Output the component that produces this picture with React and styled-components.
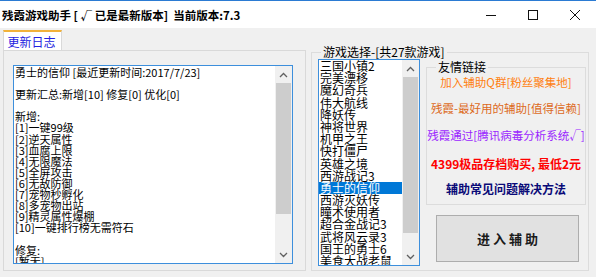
import React from 'react';
import styled, { createGlobalStyle } from 'styled-components';

const GlobalStyle = createGlobalStyle`
  html, body {
    margin: 0;
    padding: 0;
    background: #f0f0f0;
  }
  body {
    font-family: "Noto Sans CJK SC", "Noto Sans", sans-serif;
    font-size: 12px;
    color: #000;
  }
`;

const Window = styled.div`
  width: 596px;
  height: 277px;
  overflow: hidden;
  box-sizing: border-box;
  border-top: 1px solid #2b7bd3;
  background: #f0f0f0;
  display: flex;
  flex-direction: column;
`;

const TitleBar = styled.div`
  height: 27px;
  flex-shrink: 0;
  background: #fff;
  display: flex;
  align-items: center;
`;

const Title = styled.div`
  padding-left: 2px;
  font-weight: bold;
  font-size: 11.5px;
  white-space: pre;
`;

const Controls = styled.div`
  margin-left: auto;
  display: flex;
  height: 100%;
`;

const CtrlButton = styled.div`
  width: 42px;
  display: flex;
  align-items: center;
  justify-content: center;
`;

const Body = styled.div`
  display: flex;
  align-items: flex-start;
  padding: 2px 0 0 3px;
`;

const LeftCol = styled.div`
  width: 303px;
  display: flex;
  flex-direction: column;
`;

const TabStrip = styled.div`
  display: flex;
  height: 20px;
`;

const Tab = styled.div`
  width: 59px;
  height: 20px;
  box-sizing: border-box;
  border: 1px solid #d9d9d9;
  border-top: 2px solid #f2b23a;
  border-bottom: none;
  background: #fff;
  color: #2222e0;
  font-size: 12px;
  display: flex;
  align-items: center;
  justify-content: center;
  padding-right: 2px;
`;

const Panel = styled.div`
  height: 221px;
  box-sizing: border-box;
  border: 1px solid #d9d9d9;
  background: #f0f0f0;
  padding: 14px 0 0 9px;
`;

const TextBox = styled.div`
  width: 280px;
  height: 199px;
  box-sizing: border-box;
  border: 1px solid #3d8fdc;
  background: #fff;
  display: flex;
`;

const TextContent = styled.div`
  flex: 1;
  overflow: hidden;
  padding: 1px 0 0 1px;
  font-size: 11px;
  line-height: 11.1px;
  white-space: pre;
`;

const Scrollbar = styled.div`
  width: 17px;
  flex-shrink: 0;
  background: #f0f0f0;
  display: flex;
  flex-direction: column;
`;

const Arrow = styled.div`
  height: 17px;
  flex-shrink: 0;
  display: flex;
  align-items: center;
  justify-content: center;
  margin-top: ${p => (p.$bottom ? 'auto' : '0')};
`;

const Thumb = styled.div`
  height: ${p => p.$h}px;
  margin: 0 1px;
  background: #cdcdcd;
`;

const GroupBox = styled.fieldset`
  width: ${p => p.$w}px;
  box-sizing: border-box;
  margin: ${p => p.$m};
  padding: ${p => p.$p};
  border: 1px solid #dcdcdc;
  min-width: 0;
`;

const Legend = styled.legend`
  padding: 0 2px;
  margin-left: ${p => p.$ml}px;
  line-height: 14px;
  font-size: 12px;
`;

const GameRow = styled.div`
  display: flex;
  align-items: flex-start;
`;

const ListBox = styled.div`
  width: 102px;
  height: 207px;
  box-sizing: border-box;
  border: 1px solid #3d8fdc;
  background: #fff;
  display: flex;
`;

const ListItems = styled.div`
  flex: 1;
  overflow: hidden;
`;

const ListItem = styled.div`
  height: 12.2px;
  line-height: 12.2px;
  padding-left: 1px;
  font-size: 12px;
  white-space: nowrap;
  background: ${p => (p.$selected ? '#0078d7' : 'transparent')};
  color: ${p => (p.$selected ? '#fff' : '#000')};
`;

const RightCol = styled.div`
  margin: 1px 0 0 6px;
  display: flex;
  flex-direction: column;
`;

const LinkLine = styled.div`
  margin-top: ${p => p.$mt}px;
  height: 16px;
  line-height: 16px;
  text-align: center;
  white-space: nowrap;
  font-size: ${p => (p.$bold ? '12px' : '11.5px')};
  font-weight: ${p => (p.$bold ? 'bold' : 'normal')};
  color: ${p => p.$color};
`;

const EnterButton = styled.button`
  width: 143px;
  height: 47px;
  margin: 10px 0 0 10px;
  box-sizing: border-box;
  background: #e1e1e1;
  border: 1px solid #adadad;
  font-family: inherit;
  font-size: 13px;
  font-weight: bold;
  color: #1a1a1a;
  white-space: pre;
  padding: 0;
`;

const Chevron = ({ up }) => (
  <svg width="9" height="6" viewBox="0 0 9 6">
    <path
      d={up ? 'M1 5 L4.5 1.5 L8 5' : 'M1 1 L4.5 4.5 L8 1'}
      fill="none"
      stroke="#606060"
      strokeWidth="1.3"
    />
  </svg>
);

const logLines = [
  '勇士的信仰 [最近更新时间:2017/7/23]',
  '',
  '更新汇总:新增[10] 修复[0] 优化[0]',
  '',
  '新增:',
  '[1]一键99级',
  '[2]逆天属性',
  '[3]血腐上限',
  '[4]无限魔法',
  '[5]全屏攻击',
  '[6]无敌防御',
  '[7]宠物秒孵化',
  '[8]多宠物出站',
  '[9]精灵属性爆棚',
  '[10]一键排行榜无需符石',
  '',
  '修复:',
  '[暂无]',
];

const games = [
  '三国小镇2', '完美漂移', '魔幻奇兵', '伟大航线', '降妖传', '神将世界',
  '机甲之王', '快打僵尸', '英雄之境', '西游战记3', '勇士的信仰', '西游灭妖传',
  '瞳术使用者', '超合金战记3', '武将风云录3', '国王的勇士6', '美食大战老鼠',
];

const links = [
  { text: '加入辅助Q群[粉丝聚集地]', color: '#ff7f10', mt: 0 },
  { text: '残霞-最好用的辅助[值得信赖]', color: '#dd6a1c', mt: 10 },
  { text: '残霞通过[腾讯病毒分析系统√]', color: '#9a26ff', mt: 11 },
  { text: '4399极品存档购买, 最低2元', color: '#ff0000', mt: 13, bold: true },
  { text: '辅助常见问题解决方法', color: '#0a0a78', mt: 9, bold: true },
];

const App = () => {
  return (
    <Window>
      <GlobalStyle />
      <TitleBar>
        <Title>残霞游戏助手 [ √ 已是最新版本]  当前版本:7.3</Title>
        <Controls>
          <CtrlButton>
            <svg width="10" height="10" viewBox="0 0 10 10">
              <path d="M0 5.5 H10" stroke="#111" strokeWidth="1" />
            </svg>
          </CtrlButton>
          <CtrlButton>
            <svg width="10" height="10" viewBox="0 0 10 10">
              <rect x="0.5" y="0.5" width="9" height="9" fill="none" stroke="#111" strokeWidth="1" />
            </svg>
          </CtrlButton>
          <CtrlButton>
            <svg width="10" height="10" viewBox="0 0 10 10">
              <path d="M0 0 L10 10 M10 0 L0 10" stroke="#111" strokeWidth="1" />
            </svg>
          </CtrlButton>
        </Controls>
      </TitleBar>

      <Body>
        <LeftCol>
          <TabStrip>
            <Tab>更新日志</Tab>
          </TabStrip>
          <Panel>
            <TextBox>
              <TextContent>
                {logLines.map((l, i) => (
                  <div key={i}>{l || ' '}</div>
                ))}
              </TextContent>
              <Scrollbar>
                <Arrow><Chevron up /></Arrow>
                <Thumb $h={131} />
                <Arrow $bottom><Chevron /></Arrow>
              </Scrollbar>
            </TextBox>
          </Panel>
        </LeftCol>

        <GroupBox $w={278} $m="15px 0 0 5px" $p="0 2px 4px 6px">
          <Legend $ml={3}>游戏选择-[共27款游戏]</Legend>
          <GameRow>
            <ListBox>
              <ListItems>
                {games.map((g, i) => (
                  <ListItem key={g} $selected={i === 10}>{g}</ListItem>
                ))}
              </ListItems>
              <Scrollbar>
                <Arrow><Chevron up /></Arrow>
                <Thumb $h={156} />
                <Arrow $bottom><Chevron /></Arrow>
              </Scrollbar>
            </ListBox>
            <RightCol>
              <GroupBox $w={160} $m="0" $p="0 0 7px 0">
                <Legend $ml={9}>友情链接</Legend>
                {links.map(l => (
                  <LinkLine key={l.text} $mt={l.mt} $color={l.color} $bold={l.bold}>
                    {l.text}
                  </LinkLine>
                ))}
              </GroupBox>
              <EnterButton>进 入 辅 助</EnterButton>
            </RightCol>
          </GameRow>
        </GroupBox>
      </Body>
    </Window>
  );
};

export default App;
